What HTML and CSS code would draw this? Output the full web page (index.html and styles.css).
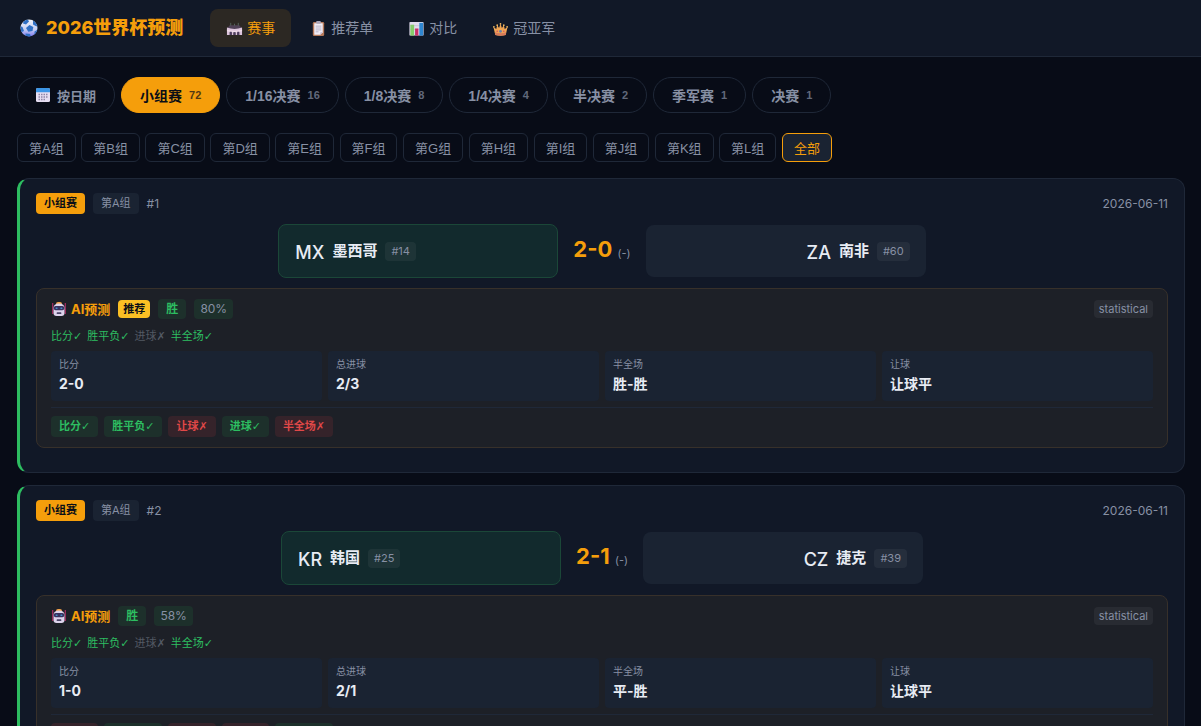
FILE: index.html
```html
<!DOCTYPE html>
<html lang="zh-CN">
<head>
    <meta charset="UTF-8">
    <meta name="viewport" content="width=device-width, initial-scale=1.0">
    <title>2026世界杯预测</title>
    <link rel="stylesheet" href="styles.css">
</head>
<body>
    <!-- shared icons -->
    <svg class="sprite" aria-hidden="true">
        <symbol id="icon-robot" viewBox="0 0 16 16">
            <path d="M1.700 2v11M14.300 2v11" stroke="#a82c62" stroke-width="1.200"/>
            <rect x="5" y="1" width="6" height="4" rx="2" fill="#f0a04a"/>
            <path d="M2.500 7q0-4.500 5.500-4.500T13.500 7v5q0 3-3 3h-5q-3 0-3-3z" fill="#ddd3ec"/>
            <rect x="2.800" y="5" width="10.400" height="4.200" rx="1.800" fill="#38325f"/>
            <rect x="4.500" y="6.400" width="2.200" height="1.600" rx=".8" fill="#4590c8"/>
            <rect x="9.300" y="6.400" width="2.200" height="1.600" rx=".8" fill="#4590c8"/>
            <rect x="5.700" y="11.300" width="4.600" height="1.600" rx=".5" fill="#4a4468"/>
        </symbol>
    </svg>

    <header class="header">
        <div class="logo">
            <svg class="logo-icon" viewBox="0 0 18 18" aria-hidden="true">
                <defs>
                    <linearGradient id="ball" x1="0" y1="0" x2="0" y2="1">
                        <stop offset="0" stop-color="#f2f5fb"/>
                        <stop offset=".6" stop-color="#c4cdf2"/>
                        <stop offset="1" stop-color="#7c78ee"/>
                    </linearGradient>
                    <clipPath id="ball-clip"><circle cx="9" cy="9" r="8.5"/></clipPath>
                </defs>
                <circle cx="9" cy="9" r="8.5" fill="url(#ball)"/>
                <g fill="#2f6fc4" clip-path="url(#ball-clip)">
                    <path d="M9.500 6l3.800 2-.8 4-4.200.7L6 9z"/>
                    <path d="M3.500 2l4-2 1.500 2.500-3 3-3-1z"/>
                    <path d="M13 1l5 4-1.500 2.500-3.500-2z"/>
                    <path d="M0 7l2.500 1 1.500 4-3 1.500z"/>
                    <path d="M5.500 14.500l4.500.5 1 3-5 .5z"/>
                    <path d="M14.500 12.500l3.500-2-1 5-2.500 1z"/>
                </g>
            </svg>
            <span>2026世界杯预测</span>
        </div>
        <nav class="nav">
            <a href="#matches" class="active">
                <svg viewBox="0 0 18 18" aria-hidden="true">
                    <path d="M2 8l2-2.500h10L16 8v3H2z" fill="#4f4157"/>
                    <path d="M5 3v3M13 3v3M9 4v2" stroke="#56645f" stroke-width="1"/>
                    <path d="M1 8q8 3 16 0v8h-3v-3h-2v3h-2v-3H8v3H6v-3H4v3H1z" fill="#dcc4dc"/>
                    <path d="M1 10q8 3 16 0v2q-8 2-16 0z" fill="#efdcea"/>
                    <path d="M4 12.500h2v3.500H4zM8 13h2v3H8zM12 12.500h2v3.500h-2z" fill="#4d3b62"/>
                </svg>
                赛事
            </a>
            <a href="#picks">
                <svg viewBox="0 0 18 18" aria-hidden="true">
                    <rect x="3" y="2" width="12" height="15" rx="1.500" fill="#b5795a"/>
                    <path d="M4.500 3.500h9V13L11 15.500H4.500z" fill="#f0ecf6"/>
                    <path d="M13.500 13H11v2.500z" fill="#c2b8d0"/>
                    <rect x="6.500" y="1" width="5" height="3" rx="1" fill="#a9a4b8"/>
                    <path d="M6 6.500h6M6 8.500h6M6 10.500h6M6 12.500h3" stroke="#a8a3bb" stroke-width=".8"/>
                </svg>
                推荐单
            </a>
            <a href="#compare">
                <svg viewBox="0 0 18 18" aria-hidden="true">
                    <rect x="1.500" y="2" width="15" height="14.500" rx="1" fill="#e2dcee"/>
                    <path d="M2 6h14M2 10h14" stroke="#beb7cc" stroke-width=".6"/>
                    <rect x="2.500" y="5" width="4" height="11.500" fill="#86cc6a"/>
                    <rect x="7.500" y="9" width="3.500" height="7.500" fill="#c92d68"/>
                    <rect x="12" y="3" width="4" height="13.500" fill="#2e86d1"/>
                </svg>
                对比
            </a>
            <a href="#champion">
                <svg viewBox="0 0 18 18" aria-hidden="true">
                    <path d="M3.500 16L1.500 7.500l3 2L5.500 5.500l2 3L9 4l1.500 4.500 2-3 1 4 3-2-2 8.500q-5.500 1.500-11 0z" fill="#f0a553"/>
                    <path d="M3 13q6 2 12 0l-.5 3q-5.500 1.500-11 0z" fill="#d77b5c"/>
                    <circle cx="2" cy="7.200" r=".9" fill="#f7bd62"/>
                    <circle cx="5.500" cy="5.500" r=".9" fill="#f7bd62"/>
                    <circle cx="9" cy="4" r=".9" fill="#f7bd62"/>
                    <circle cx="12.500" cy="5.500" r=".9" fill="#f7bd62"/>
                    <circle cx="16" cy="7.200" r=".9" fill="#f7bd62"/>
                    <circle cx="9" cy="12" r="1.500" fill="#6b7fa8"/>
                    <circle cx="5.500" cy="12" r=".8" fill="#d5456b"/>
                    <circle cx="12.500" cy="12" r=".8" fill="#d5456b"/>
                </svg>
                冠亚军
            </a>
        </nav>
    </header>

    <main class="container">
        <div class="stages">
            <button type="button" class="by-date">
                <svg viewBox="0 0 14 14" aria-hidden="true">
                    <rect x="0" y="0" width="14" height="14" rx="1.500" fill="#e6def2"/>
                    <path d="M0 4.200V1.500Q0 0 1.500 0h11Q14 0 14 1.500v2.700z" fill="#3b95e6"/>
                    <path d="M2.500 6.500h9M2.500 9h9M2.500 11.500h7" stroke="#8f86a8" stroke-width="1.300" stroke-dasharray="1.500 1"/>
                </svg>
                按日期
            </button>
            <button type="button" class="active">小组赛<span class="count">72</span></button>
            <button type="button">1/16决赛<span class="count">16</span></button>
            <button type="button">1/8决赛<span class="count">8</span></button>
            <button type="button">1/4决赛<span class="count">4</span></button>
            <button type="button">半决赛<span class="count">2</span></button>
            <button type="button">季军赛<span class="count">1</span></button>
            <button type="button">决赛<span class="count">1</span></button>
        </div>

        <div class="groups">
            <button type="button">第A组</button>
            <button type="button">第B组</button>
            <button type="button">第C组</button>
            <button type="button">第D组</button>
            <button type="button">第E组</button>
            <button type="button">第F组</button>
            <button type="button">第G组</button>
            <button type="button">第H组</button>
            <button type="button">第I组</button>
            <button type="button">第J组</button>
            <button type="button">第K组</button>
            <button type="button">第L组</button>
            <button type="button" class="active">全部</button>
        </div>

        <div class="matches" id="matches">
            <article class="match">
                <div class="match-head">
                    <span class="tag tag-stage">小组赛</span>
                    <span class="tag tag-group">第A组</span>
                    <span class="match-no">#1</span>
                    <time class="match-date" datetime="2026-06-11">2026-06-11</time>
                </div>
                <div class="teams">
                    <div class="team home winner">
                        <span class="flag">MX</span>
                        <span class="name">墨西哥</span>
                        <span class="rank">#14</span>
                    </div>
                    <div class="score">2-0 <small>(-)</small></div>
                    <div class="team away">
                        <span class="flag">ZA</span>
                        <span class="name">南非</span>
                        <span class="rank">#60</span>
                    </div>
                </div>
                <section class="ai">
                    <div class="ai-head">
                        <span class="ai-title"><svg aria-hidden="true"><use href="#icon-robot"/></svg>AI预测</span>
                        <span class="pick">推荐</span>
                        <span class="result">胜</span>
                        <span class="confidence">80%</span>
                        <span class="model">statistical</span>
                    </div>
                    <div class="marks">
                        <span>比分✓</span>
                        <span>胜平负✓</span>
                        <span class="off">进球✗</span>
                        <span>半全场✓</span>
                    </div>
                    <dl class="cells">
                        <div><dt>比分</dt><dd>2-0</dd></div>
                        <div><dt>总进球</dt><dd>2/3</dd></div>
                        <div><dt>半全场</dt><dd>胜-胜</dd></div>
                        <div><dt>让球</dt><dd>让球平</dd></div>
                    </dl>
                    <div class="checks">
                        <span class="hit">比分✓</span>
                        <span class="hit">胜平负✓</span>
                        <span class="miss">让球✗</span>
                        <span class="hit">进球✓</span>
                        <span class="miss">半全场✗</span>
                    </div>
                </section>
            </article>

            <article class="match">
                <div class="match-head">
                    <span class="tag tag-stage">小组赛</span>
                    <span class="tag tag-group">第A组</span>
                    <span class="match-no">#2</span>
                    <time class="match-date" datetime="2026-06-11">2026-06-11</time>
                </div>
                <div class="teams">
                    <div class="team home winner">
                        <span class="flag">KR</span>
                        <span class="name">韩国</span>
                        <span class="rank">#25</span>
                    </div>
                    <div class="score">2-1 <small>(-)</small></div>
                    <div class="team away">
                        <span class="flag">CZ</span>
                        <span class="name">捷克</span>
                        <span class="rank">#39</span>
                    </div>
                </div>
                <section class="ai">
                    <div class="ai-head">
                        <span class="ai-title"><svg aria-hidden="true"><use href="#icon-robot"/></svg>AI预测</span>
                        <span class="result">胜</span>
                        <span class="confidence">58%</span>
                        <span class="model">statistical</span>
                    </div>
                    <div class="marks">
                        <span>比分✓</span>
                        <span>胜平负✓</span>
                        <span class="off">进球✗</span>
                        <span>半全场✓</span>
                    </div>
                    <dl class="cells">
                        <div><dt>比分</dt><dd>1-0</dd></div>
                        <div><dt>总进球</dt><dd>2/1</dd></div>
                        <div><dt>半全场</dt><dd>平-胜</dd></div>
                        <div><dt>让球</dt><dd>让球平</dd></div>
                    </dl>
                    <div class="checks">
                        <span class="miss">比分✗</span>
                        <span class="hit">胜平负✓</span>
                        <span class="miss">让球✗</span>
                        <span class="miss">进球✗</span>
                        <span class="hit">半全场✓</span>
                    </div>
                </section>
            </article>
        </div>
    </main>
</body>
</html>
```
FILE: styles.css
```css
:root {
    --bg: #080c17;
    --card: #111827;
    --card-2: #1a2332;
    --line: #1f2838;
    --text: #e8ecf4;
    --muted: #8790a4;
    --gold: #f59e0b;
    --green: #2dbd61;
    --red: #e04848;
}

* {
    box-sizing: border-box;
    margin: 0;
    padding: 0;
}

body {
    font-family: Inter, "Noto Sans CJK SC", sans-serif;
    font-size: 14px;
    line-height: 22px;
    background: var(--bg);
    color: var(--text);
}

button {
    font-family: "Liberation Sans", "Noto Sans CJK SC", sans-serif;
    background: transparent;
    color: var(--muted);
    border: 1px solid var(--line);
    cursor: pointer;
    white-space: nowrap;
}

.sprite {
    display: none;
}

/* header */
.header {
    display: flex;
    align-items: center;
    gap: 27px;
    min-height: 57px;
    padding: 0 20px;
    background: var(--card);
    border-bottom: 1px solid var(--line);
}

.logo {
    display: flex;
    align-items: center;
    gap: 8px;
    font-size: 18px;
    font-weight: 800;
    color: var(--gold);
    white-space: nowrap;
}

.logo-icon {
    width: 18px;
    height: 18px;
}

.nav {
    display: flex;
    gap: 3px;
}

.nav a {
    display: flex;
    align-items: center;
    gap: 4px;
    padding: 8px 16px;
    border-radius: 8px;
    color: var(--muted);
    text-decoration: none;
    white-space: nowrap;
}

.nav a.active {
    background: rgba(245, 158, 11, 0.12);
    color: var(--gold);
}

.nav svg {
    width: 17px;
    height: 17px;
}

/* filters */
.container {
    padding: 20px 16px 20px 17px;
}

.stages {
    display: flex;
    flex-wrap: wrap;
    gap: 6px;
    margin-bottom: 20px;
}

.stages button {
    display: flex;
    align-items: center;
    gap: 7px;
    height: 36px;
    padding: 0 18px;
    border-radius: 18px;
    font-size: 14px;
    font-weight: 600;
}

.stages .by-date {
    font-size: 13px;
}

.stages button.active {
    background: var(--gold);
    border-color: var(--gold);
    color: #0a0e17;
}

.stages svg {
    width: 14px;
    height: 14px;
}

.stages .count {
    font-size: 11px;
    opacity: 0.7;
}

.groups {
    display: flex;
    flex-wrap: wrap;
    justify-content: space-between;
    max-width: 815px;
    margin-bottom: 16px;
}

.groups button {
    height: 29px;
    padding: 0 11px;
    border-radius: 6px;
    font-size: 13px;
}

.groups button.active {
    background: var(--card-2);
    border-color: var(--gold);
    color: var(--gold);
}

/* match card */
.matches {
    display: flex;
    flex-direction: column;
    gap: 12px;
}

.match {
    padding: 14px 16px 24px;
    background: var(--card);
    border: 1px solid var(--line);
    border-left: 3px solid var(--green);
    border-radius: 12px;
}

.match-head {
    display: flex;
    align-items: center;
    gap: 8px;
    font-size: 12px;
    line-height: 21px;
    color: var(--muted);
}

.tag {
    padding: 0 8px;
    border-radius: 4px;
    font-size: 11px;
}

.tag-stage {
    background: var(--gold);
    color: #0a0e17;
    font-weight: 700;
}

.tag-group {
    background: var(--card-2);
}

.match-date {
    margin-left: auto;
}

.teams {
    display: flex;
    align-items: center;
    justify-content: center;
    gap: 15px;
    margin: 10px 0;
}

.team {
    display: flex;
    align-items: center;
    gap: 8px;
    flex: 0 1 280px;
    padding: 12px 16px;
    line-height: 28px;
    background: var(--card-2);
    border-radius: 8px;
}

.team.away {
    justify-content: flex-end;
}

.team.winner {
    background: #122a2d;
    border: 1px solid #1b4738;
}

.flag {
    padding-top: 4px;
    font-size: 18px;
    font-weight: 500;
    line-height: 24px;
}

.name {
    font-size: 15px;
    font-weight: 600;
}

.rank {
    padding: 0 6px;
    border-radius: 4px;
    background: rgba(255, 255, 255, 0.05);
    font-size: 11px;
    line-height: 19px;
    color: var(--muted);
}

.score {
    font-size: 22px;
    font-weight: 700;
    line-height: 24px;
    color: var(--gold);
}

.score small {
    font-size: 11px;
    font-weight: 400;
    color: var(--muted);
}

/* prediction */
.ai {
    padding: 10px 14px;
    background: #1d2027;
    border: 1px solid #37302a;
    border-radius: 8px;
}

.ai-head {
    display: flex;
    align-items: center;
    gap: 8px;
    line-height: 20px;
}

.ai-title {
    display: flex;
    align-items: center;
    gap: 4px;
    font-size: 13px;
    font-weight: 700;
    color: var(--gold);
}

.ai-title svg {
    width: 16px;
    height: 16px;
}

.pick,
.model {
    padding: 0 5px;
    border-radius: 4px;
    font-size: 11px;
    line-height: 18px;
}

.pick {
    background: #fbbf24;
    color: #0a0e17;
    font-weight: 700;
}

.model {
    margin-left: auto;
    background: rgba(255, 255, 255, 0.05);
    color: var(--muted);
}

.result,
.confidence {
    border-radius: 4px;
    background: #1d302b;
}

.result {
    padding: 0 8px;
    font-size: 12px;
    font-weight: 700;
    color: var(--green);
}

.confidence {
    padding: 0 6px;
    font-size: 12px;
    color: var(--muted);
}

/* the ticks and crosses come from DejaVu */
.marks,
.checks {
    display: flex;
    gap: 6px;
    font-family: "DejaVu Sans", "Noto Sans CJK SC", sans-serif;
    font-size: 11px;
}

.marks {
    gap: 5px;
    height: 20px;
    margin: 8px 0 4px;
    line-height: 20px;
    color: var(--green);
}

.marks .off {
    color: #535963;
}

.cells {
    display: grid;
    grid-template-columns: repeat(4, 1fr);
    gap: 6px;
}

.cells div {
    padding: 4px 8px 6px;
    background: var(--card-2);
    border-radius: 4px;
}

.cells dt {
    font-size: 10px;
    line-height: 18px;
    color: var(--muted);
}

.cells dd {
    font-size: 14px;
    font-weight: 700;
    line-height: 22px;
}

.checks {
    margin-top: 6px;
    padding-top: 8px;
    border-top: 1px solid var(--line);
    font-weight: 600;
    line-height: 21px;
}

.checks span {
    height: 21px;
    padding: 0 8px;
    border-radius: 4px;
}

.hit {
    background: #1d302b;
    color: var(--green);
}

.miss {
    background: #35232a;
    color: var(--red);
}

@media (max-width: 768px) {
    .header {
        flex-wrap: wrap;
    }

    .cells {
        grid-template-columns: repeat(2, 1fr);
    }
}
```
